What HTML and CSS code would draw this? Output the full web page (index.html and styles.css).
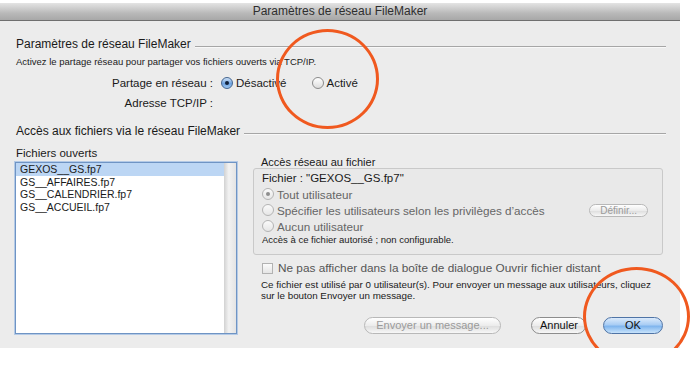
FILE: index.html
```html
<!DOCTYPE html>
<html lang="fr">
<head>
    <meta charset="UTF-8">
    <title>Paramètres de réseau FileMaker</title>
    <link rel="stylesheet" href="styles.css">
</head>

<body>
    <div class="window">
        <div class="titlebar">Paramètres de réseau FileMaker</div>

        <div class="content">
            <h2 class="group-title"><span>Paramètres de réseau FileMaker</span></h2>
            <p class="hint">Activez le partage réseau pour partager vos fichiers ouverts via TCP/IP.</p>

            <div class="form-row">
                <span class="label">Partage en réseau :</span>
                <span class="radio on"></span><span class="opt">Désactivé</span>
                <span class="radio second"></span><span class="opt">Activé</span>
            </div>
            <div class="form-row addr">
                <span class="label">Adresse TCP/IP :</span>
            </div>

            <h2 class="group-title files-title"><span>Accès aux fichiers via le réseau FileMaker</span></h2>

            <div class="files">
                <div class="files-col">
                    <div class="col-label">Fichiers ouverts</div>
                    <div class="listbox">
                        <ul class="list">
                            <li class="selected">GEXOS__GS.fp7</li>
                            <li>GS__AFFAIRES.fp7</li>
                            <li>GS__CALENDRIER.fp7</li>
                            <li>GS__ACCUEIL.fp7</li>
                        </ul>
                        <div class="scrolltrack"></div>
                    </div>
                </div>

                <div class="access-col">
                    <div class="col-label access-label">Accès réseau au fichier</div>
                    <div class="access-box">
                        <div class="file-name">Fichier : "GEXOS__GS.fp7"</div>
                        <div class="box-row"><span class="radio dis dot"></span>Tout utilisateur</div>
                        <div class="box-row">
                            <span class="radio dis"></span>Spécifier les utilisateurs selon les privilèges d’accès
                            <span class="btn small dis define">Définir...</span>
                        </div>
                        <div class="box-row"><span class="radio dis"></span>Aucun utilisateur</div>
                        <div class="box-note">Accès à ce fichier autorisé ; non configurable.</div>
                    </div>

                    <div class="check-row"><span class="checkbox"></span>Ne pas afficher dans la boîte de dialogue Ouvrir fichier distant</div>
                    <p class="message">Ce fichier est utilisé par 0 utilisateur(s). Pour envoyer un message aux utilisateurs, cliquez sur le bouton Envoyer un message.</p>

                    <div class="buttons">
                        <span class="btn dis send">Envoyer un message...</span>
                        <span class="btn cancel">Annuler</span>
                        <span class="btn ok">OK</span>
                    </div>
                </div>
            </div>
        </div>

        <span class="mark mark-net"></span>
        <span class="mark mark-ok"></span>
    </div>
</body>
</html>
```

FILE: styles.css
```css
body {
    margin: 0;
    background-color: white;
    font-family: 'Liberation Sans', Arial, sans-serif;
    color: #1a1a1a;
}

.window {
    position: relative;
    width: 680px;
    height: 345px;
    margin-top: 3px;
    background-color: #ececec;
}

.titlebar {
    height: 17px;
    line-height: 17px;
    text-align: center;
    font-size: 12px;
    color: #2e2e2e;
    background: linear-gradient(#e4e4e4, #b9b9b9 60%, #a8a8a8);
    border-bottom: 1px solid #6f6f6f;
}

.content {
    padding: 16px 14px 0 16px;
}

.group-title {
    display: flex;
    align-items: center;
    margin: 0;
    font-size: 12px;
    font-weight: normal;
    line-height: 14px;
    height: 14px;
}

.group-title::after {
    content: "";
    flex: 1;
    margin-left: 4px;
    margin-top: 6px;
    border-top: 1px solid #a6a6a6;
    border-bottom: 1px solid #f8f8f8;
}

.hint {
    margin: 5px 0 0 0;
    font-size: 9.5px;
    line-height: 12px;
}

.form-row {
    display: flex;
    align-items: center;
    height: 16px;
    margin-top: 7px;
    font-size: 11.5px;
}

.form-row .label {
    width: 197px;
    text-align: right;
    margin-right: 8px;
}

.form-row.addr {
    margin-top: 4px;
}

.opt {
    margin-left: 3px;
}

.radio {
    display: inline-block;
    flex-shrink: 0;
    box-sizing: border-box;
    width: 12px;
    height: 12px;
    border-radius: 50%;
    border: 1px solid #8b8b8b;
    background: linear-gradient(#ffffff, #dcdcdc);
    position: relative;
}

.radio.second {
    margin-left: 25px;
}

.radio.on {
    border-color: #44658f;
    background: linear-gradient(#cfe2f7, #6fa3e0 55%, #9cc6f2);
}

.radio.on::after,
.radio.dot::after {
    content: "";
    position: absolute;
    left: 3px;
    top: 3px;
    width: 4px;
    height: 4px;
    border-radius: 50%;
    background-color: #10203a;
}

.radio.dis {
    border-color: #b4b4b4;
    background: linear-gradient(#fafafa, #e6e6e6);
    margin-right: 3px;
}

.radio.dis.dot::after {
    background-color: #8e8e8e;
}

.files-title {
    margin-top: 13px;
}

.files {
    display: flex;
    gap: 16px;
}

.files-col {
    width: 222px;
    margin-left: -1px;
}

.col-label {
    margin-top: 8px;
    margin-left: 1px;
    font-size: 11.5px;
    line-height: 14px;
}

.listbox {
    display: flex;
    margin-top: 2px;
    height: 172px;
    box-sizing: border-box;
    border: 1px solid #6f94c4;
    box-shadow: 0 0 0 1px #b4cae6;
    background-color: white;
}

.list {
    flex: 1;
    margin: 0;
    padding: 0;
    list-style: none;
    font-size: 10.5px;
    line-height: 12.7px;
}

.list li {
    padding-left: 4px;
}

.list li.selected {
    background-color: #bcd6f4;
}

.scrolltrack {
    width: 12px;
    background: linear-gradient(90deg, #d2d2d2, #f2f2f2 40%, #e4e4e4);
}

.access-col {
    flex: 1;
    display: flex;
    flex-direction: column;
    padding-right: 3px;
}

.access-label {
    margin-top: 18px;
    margin-left: 8px;
    font-size: 11px;
    line-height: 12px;
}

.access-box {
    height: 87px;
    box-sizing: border-box;
    border: 1px solid #c9c9c9;
    border-radius: 3px;
    background-color: #e9e9e9;
    padding: 2px 0 0 8px;
    font-size: 11.7px;
    color: #666;
}

.file-name {
    line-height: 15px;
    color: #1a1a1a;
    font-size: 11.5px;
}

.box-row {
    display: flex;
    align-items: center;
    height: 16px;
}

.box-row:first-of-type {
    margin-top: 2px;
}

.define {
    margin-left: auto;
    margin-right: 14px;
}

.box-note {
    font-size: 9.5px;
    line-height: 11px;
    color: #1a1a1a;
}

.check-row {
    display: flex;
    align-items: center;
    height: 16px;
    margin-top: 5px;
    padding-left: 9px;
    font-size: 11.8px;
    color: #555;
}

.checkbox {
    display: inline-block;
    box-sizing: border-box;
    width: 11px;
    height: 11px;
    border: 1px solid #b2b2b2;
    background: linear-gradient(#fbfbfb, #e5e5e5);
    margin-right: 5px;
}

.message {
    margin: 4px 0 0 8px;
    width: 402px;
    font-size: 9.8px;
    line-height: 10.5px;
}

.buttons {
    display: flex;
    justify-content: flex-end;
    margin-top: 16px;
}

.btn {
    display: inline-block;
    box-sizing: border-box;
    height: 17px;
    line-height: 15px;
    padding: 0 8px;
    border: 1px solid #8d8d8d;
    border-radius: 9px;
    font-size: 11px;
    text-align: center;
    white-space: nowrap;
    background: linear-gradient(#ffffff, #ececec 50%, #dcdcdc 51%, #f7f7f7);
    color: #111;
}

.btn.dis {
    color: #9a9a9a;
    border-color: #b8b8b8;
}

.btn.small {
    height: 13px;
    line-height: 11px;
    font-size: 10px;
    padding: 0 10px;
}

.send {
    width: 137px;
}

.cancel {
    width: 55px;
    margin-left: 30px;
}

.ok {
    width: 60px;
    margin-left: 17px;
    border-color: #4f74a6;
    background: linear-gradient(#dbeafb, #a9cdf4 45%, #7fb5ee 55%, #c8e3fb);
}

.mark {
    position: absolute;
    box-sizing: border-box;
    border: 3.5px solid #f0591f;
    border-radius: 50%;
}

.mark-net {
    left: 276px;
    top: 26px;
    width: 103px;
    height: 100px;
}

.mark-ok {
    left: 583px;
    top: 264px;
    width: 107px;
    height: 99px;
}
```
